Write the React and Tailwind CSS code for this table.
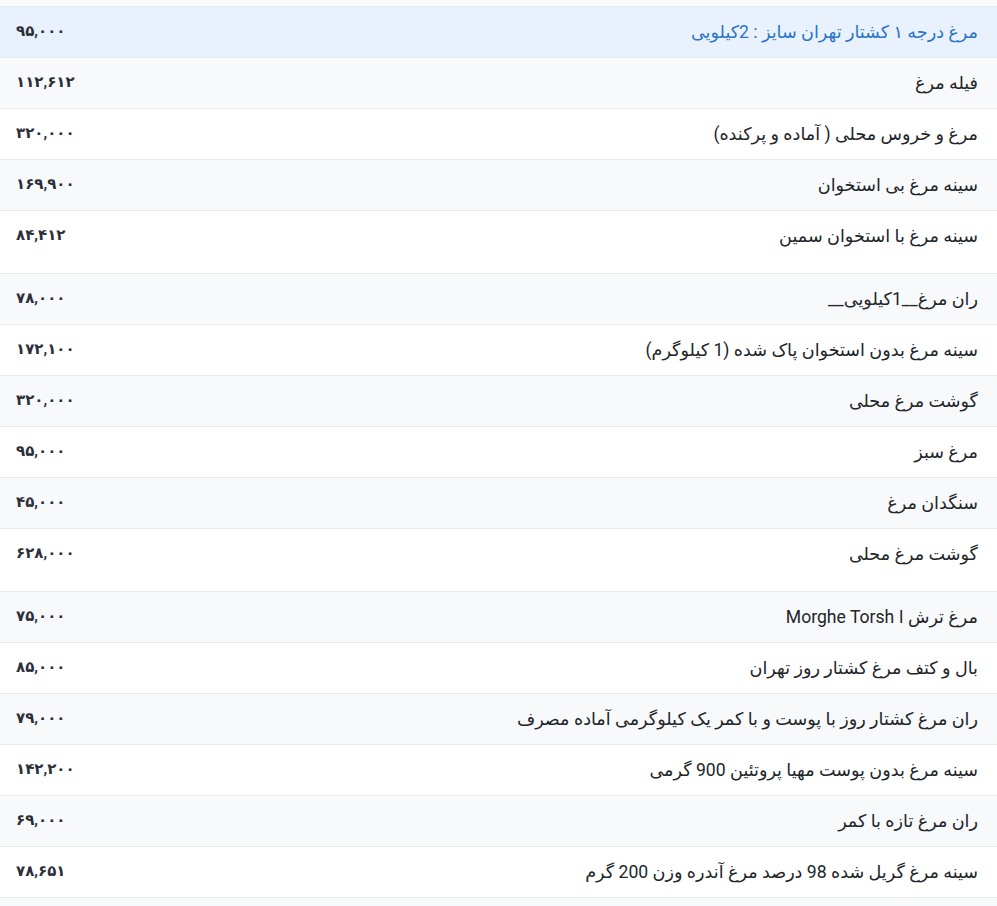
import React from "react";

const rows = [
  { name: "مرغ درجه ۱ کشتار تهران سایز : 2کیلویی", price: "۹۵,۰۰۰", active: true },
  { name: "فیله مرغ", price: "۱۱۲,۶۱۲" },
  { name: "مرغ و خروس محلی ( آماده و پرکنده)", price: "۳۲۰,۰۰۰" },
  { name: "سینه مرغ بی استخوان", price: "۱۶۹,۹۰۰" },
  { name: "سینه مرغ با استخوان سمین", price: "۸۴,۴۱۲", tall: true },
  { name: "ران مرغ__1کیلویی__", price: "۷۸,۰۰۰" },
  { name: "سینه مرغ بدون استخوان پاک شده (1 کیلوگرم)", price: "۱۷۲,۱۰۰" },
  { name: "گوشت مرغ محلی", price: "۳۲۰,۰۰۰" },
  { name: "مرغ سبز", price: "۹۵,۰۰۰" },
  { name: "سنگدان مرغ", price: "۴۵,۰۰۰" },
  { name: "گوشت مرغ محلی", price: "۶۲۸,۰۰۰", tall: true },
  { name: "مرغ ترش ا Morghe Torsh", price: "۷۵,۰۰۰" },
  { name: "بال و کتف مرغ کشتار روز تهران", price: "۸۵,۰۰۰" },
  { name: "ران مرغ کشتار روز با پوست و با کمر یک کیلوگرمی آماده مصرف", price: "۷۹,۰۰۰" },
  { name: "سینه مرغ بدون پوست مهیا پروتئین 900 گرمی", price: "۱۴۲,۲۰۰" },
  { name: "ران مرغ تازه با کمر", price: "۶۹,۰۰۰" },
  { name: "سینه مرغ گریل شده 98 درصد مرغ آندره وزن 200 گرم", price: "۷۸,۶۵۱" },
];

export default function App() {
  return (
    <div
      dir="rtl"
      className="w-[997px] h-[906px] overflow-hidden bg-white"
      style={{ fontFamily: 'Roboto, "DejaVu Sans", sans-serif' }}
    >
      <div className="h-[7px] bg-[#f8f9fb] border-b border-[#e9eaec]" />
      {rows.map((r, i) => (
        <div
          key={i}
          className={
            "flex justify-between border-b border-[#e9eaec] " +
            (r.active ? "bg-[#e9f2fc] " : i % 2 === 1 ? "bg-[#f8f9fb] " : "bg-white ") +
            (r.tall ? "h-[63px]" : "h-[51px]")
          }
        >
          <div
            className={
              "pr-[19px] pt-[12px] text-[17.6px] leading-[26px] " +
              (r.active ? "text-[#2a74c9]" : "text-[#212529]")
            }
          >
            {r.name}
          </div>
          <div className="pl-[16px] pt-[12px] text-[15px] leading-[24px] font-bold text-[#2b2f3a]">
            {r.price}
          </div>
        </div>
      ))}
      <div className="h-[20px] bg-[#f8f9fb]" />
    </div>
  );
}
